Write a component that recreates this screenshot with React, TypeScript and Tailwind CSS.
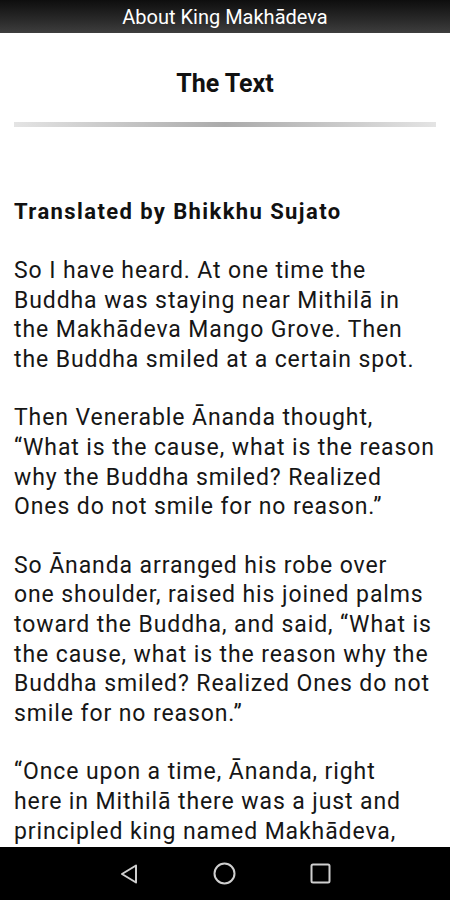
import React from "react";

const paras: string[][] = [
  [
    "So I have heard. At one time the",
    "Buddha was staying near Mithilā in",
    "the Makhādeva Mango Grove. Then",
    "the Buddha smiled at a certain spot.",
  ],
  [
    "Then Venerable Ānanda thought,",
    "“What is the cause, what is the reason",
    "why the Buddha smiled? Realized",
    "Ones do not smile for no reason.”",
  ],
  [
    "So Ānanda arranged his robe over",
    "one shoulder, raised his joined palms",
    "toward the Buddha, and said, “What is",
    "the cause, what is the reason why the",
    "Buddha smiled? Realized Ones do not",
    "smile for no reason.”",
  ],
  [
    "“Once upon a time, Ānanda, right",
    "here in Mithilā there was a just and",
    "principled king named Makhādeva,",
  ],
];

export default function App() {
  return (
    <div className="h-[900px] w-[450px] flex flex-col overflow-hidden bg-white" style={{ fontFamily: "Roboto, sans-serif" }}>
      <div className="h-[33px] shrink-0 flex items-center justify-center bg-gradient-to-b from-[#0e0e0e] to-[#3e3e3e]">
        <span className="text-white text-[20px] leading-none">About King Makhādeva</span>
      </div>
      <div className="flex-1 overflow-hidden px-[14px]">
        <div className="text-center font-bold text-[25px] text-[#111] mt-[36px] leading-[30px]">The Text</div>
        <div className="mt-[23px] h-[5px] bg-gradient-to-r from-[#e4e4e4] via-[#ababab] to-[#e4e4e4]" />
        <div className="mt-[70px] font-bold text-[22px] tracking-[1.4px] text-[#111] leading-[29px] whitespace-nowrap">
          Translated by Bhikkhu Sujato
        </div>
        <div className="mt-[30px] text-[23px] leading-[29.6px] tracking-[0.9px] text-[#161616]">
          {paras.map((p, i) => (
            <p key={i} className="mb-[29px]">
              {p.map((l, j) => (
                <span key={j} className="block whitespace-nowrap">{l}</span>
              ))}
            </p>
          ))}
        </div>
      </div>
      <div className="h-[53px] shrink-0 bg-black flex items-center justify-center">
        <div className="flex items-center gap-[74px]">
          <svg width="20" height="22" viewBox="0 0 20 22" fill="none" stroke="#cfcfcf" strokeWidth="2" strokeLinejoin="round">
            <path d="M17 2.5 L3 11 L17 19.5 Z" />
          </svg>
          <svg width="23" height="23" viewBox="0 0 23 23" fill="none" stroke="#cfcfcf" strokeWidth="2">
            <circle cx="11.5" cy="11.5" r="10" />
          </svg>
          <svg width="21" height="21" viewBox="0 0 21 21" fill="none" stroke="#cfcfcf" strokeWidth="2">
            <rect x="1.5" y="1.5" width="18" height="18" rx="1.5" />
          </svg>
        </div>
      </div>
    </div>
  );
}
